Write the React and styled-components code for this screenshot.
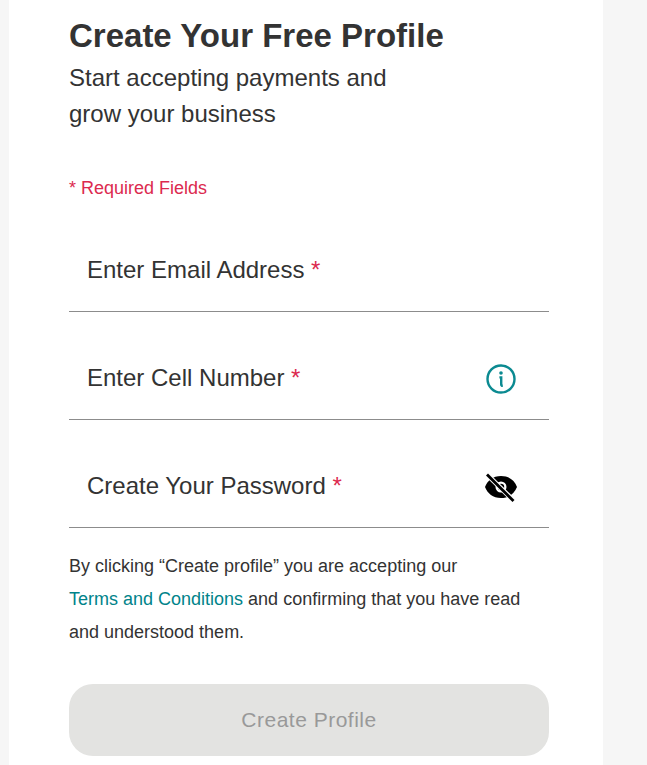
import React from "react";
import styled, { createGlobalStyle } from "styled-components";

const GlobalStyle = createGlobalStyle`
    html, body {
        margin: 0;
        padding: 0;
        height: 765px;
        overflow: hidden;
        background: #f6f6f6;
        font-family: "Liberation Sans", Arial, sans-serif;
    }
`

const Panel = styled.div`
    width: 594px;
    height: 765px;
    margin-left: 9px;
    padding: 14px 54px 0 60px;
    box-sizing: border-box;
    background: #fff;
    color: #333;
`

const Title = styled.h1`
    margin: 0;
    font-size: 33px;
    line-height: 44px;
    font-weight: 700;
`

const Subtitle = styled.p`
    margin: 2px 0 0;
    font-size: 24px;
    line-height: 36px;
`

const RequiredNote = styled.p`
    margin: 44px 0 0;
    font-size: 18px;
    line-height: 24px;
    color: #dc2a4f;
`

const Fields = styled.div`
    margin-top: 40px;
    display: flex;
    flex-direction: column;
    gap: 36px;
`

const Field = styled.div`
    height: 72px;
    padding: 0 30px 10px 18px;
    display: flex;
    align-items: center;
    justify-content: space-between;
    border-bottom: 1px solid #8c8c8c;
    box-sizing: border-box;
`

const FieldLabel = styled.span`
    font-size: 24px;
    margin-bottom: 2px;
`

const Star = styled.span`
    color: #dc2a4f;
`

const IconSlot = styled.span`
    width: 36px;
    height: 36px;
    display: flex;
    align-items: center;
    justify-content: center;
`

const Legal = styled.p`
    margin: 22px 0 0;
    font-size: 18px;
    line-height: 33px;
`

const TermsLink = styled.a`
    color: #00838a;
    text-decoration: none;
`

const SubmitButton = styled.button`
    display: block;
    width: 480px;
    height: 72px;
    margin-top: 35px;
    border: 0;
    border-radius: 24px;
    background: #e3e3e1;
    color: #999;
    font-family: inherit;
    font-size: 21px;
    letter-spacing: 0.5px;
`

const InfoIcon = () => (
    <svg width="32" height="32" viewBox="0 0 32 32" fill="none">
        <circle cx="16" cy="16" r="13.5" stroke="#0b8a91" strokeWidth="2.4" />
        <circle cx="16" cy="10" r="1.8" fill="#0b8a91" />
        <path d="M14.4 14.4H16.2V21.2Q16.2 22.8 17.8 22.8" stroke="#0b8a91" strokeWidth="2.4" />
    </svg>
)

const EyeOffIcon = () => (
    <svg width="36" height="30" viewBox="0 0 36 30">
        <path
            fillRule="evenodd"
            d="M18 4C26 4 31.5 8.5 34 15C31.5 21.5 26 26 18 26C10 26 4.5 21.5 2 15C4.5 8.5 10 4 18 4ZM18 9.5A5.5 5.5 0 1 0 18 20.5A5.5 5.5 0 1 0 18 9.5Z"
            fill="#000"
        />
        <circle cx="18" cy="15" r="3.2" fill="#000" />
        <path d="M6 4.5L30 28" stroke="#fff" strokeWidth="4.8" />
        <path d="M4 2.5L30.5 29" stroke="#000" strokeWidth="2.8" />
    </svg>
)

export default function App() {
    const fields = [
        { label: "Enter Email Address" },
        { label: "Enter Cell Number", icon: <InfoIcon /> },
        { label: "Create Your Password", icon: <EyeOffIcon /> },
    ];

    return (
        <Panel>
            <GlobalStyle />
            <Title>Create Your Free Profile</Title>
            <Subtitle>
                Start accepting payments and
                <br />
                grow your business
            </Subtitle>
            <RequiredNote>* Required Fields</RequiredNote>
            <Fields>
                {fields.map((field) => (
                    <Field key={field.label}>
                        <FieldLabel>
                            {field.label} <Star>*</Star>
                        </FieldLabel>
                        {field.icon && <IconSlot>{field.icon}</IconSlot>}
                    </Field>
                ))}
            </Fields>
            <Legal>
                By clicking “Create profile” you are accepting our
                <br />
                <TermsLink href="#">Terms and Conditions</TermsLink> and confirming that you have read
                <br />
                and understood them.
            </Legal>
            <SubmitButton disabled>Create Profile</SubmitButton>
        </Panel>
    );
}
